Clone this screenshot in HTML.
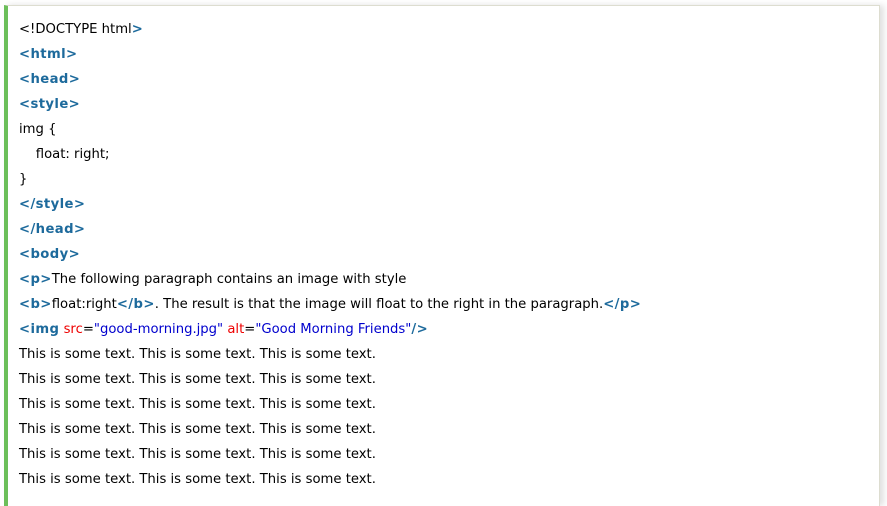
<!DOCTYPE html>
<html><head><style>
body{margin:0;background:#fff;width:887px;height:494px;overflow:hidden;}
.box{position:absolute;left:4px;top:5px;width:871px;height:500px;background:#fff;border-left:4px solid #6cbf5a;border-top:1px solid #ddddd0;border-right:1px solid #ddddd0;box-shadow:4px 0 6px rgba(0,0,0,0.12);}
.code{position:absolute;left:19px;top:17px;font-family:"DejaVu Sans","Liberation Sans",sans-serif;font-size:13.2px;color:#000;}
.l{height:25px;line-height:25px;white-space:pre;}
.t{color:#1d6a9c;font-weight:bold;letter-spacing:0.4px;}
.a{color:#e00;}
.v{color:#0000cd;}
</style></head><body>
<div class="box"></div>
<div class="code">
<div class="l">&lt;!DOCTYPE html<span class="t">&gt;</span></div>
<div class="l"><span class="t">&lt;html&gt;</span></div>
<div class="l"><span class="t">&lt;head&gt;</span></div>
<div class="l"><span class="t">&lt;style&gt;</span></div>
<div class="l">img {</div>
<div class="l">    float: right;</div>
<div class="l">}</div>
<div class="l"><span class="t">&lt;/style&gt;</span></div>
<div class="l"><span class="t">&lt;/head&gt;</span></div>
<div class="l"><span class="t">&lt;body&gt;</span></div>
<div class="l"><span class="t">&lt;p&gt;</span>The following paragraph contains an image with style</div>
<div class="l"><span class="t">&lt;b&gt;</span>float:right<span class="t">&lt;/b&gt;</span>. The result is that the image will float to the right in the paragraph.<span class="t">&lt;/p&gt;</span></div>
<div class="l"><span class="t">&lt;img</span> <span class="a">src</span>=<span class="v">"good-morning.jpg"</span> <span class="a">alt</span>=<span class="v">"Good Morning Friends"</span><span class="t">/&gt;</span></div>
<div class="l">This is some text. This is some text. This is some text.</div>
<div class="l">This is some text. This is some text. This is some text.</div>
<div class="l">This is some text. This is some text. This is some text.</div>
<div class="l">This is some text. This is some text. This is some text.</div>
<div class="l">This is some text. This is some text. This is some text.</div>
<div class="l">This is some text. This is some text. This is some text.</div>
</div>
</body></html>
